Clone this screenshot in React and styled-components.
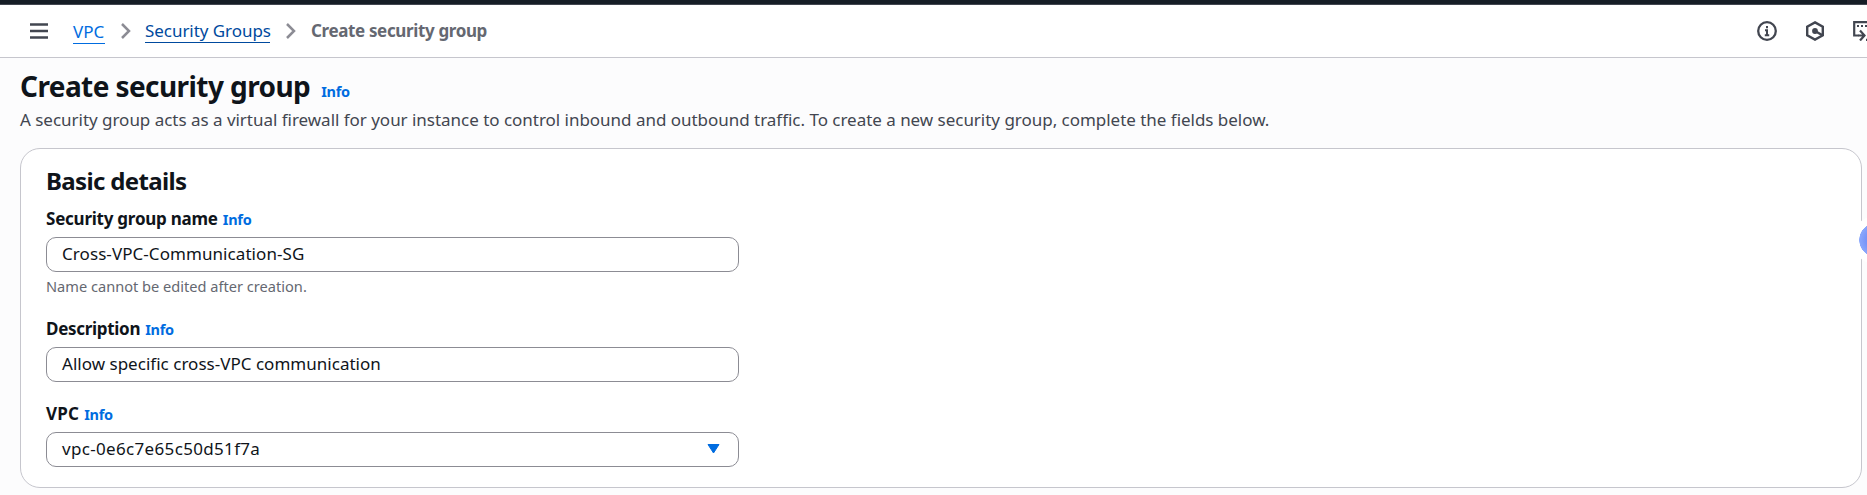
import React from 'react';
import styled, { createGlobalStyle } from 'styled-components';

const GlobalStyle = createGlobalStyle`
  * { box-sizing: border-box; }
  html, body { margin: 0; padding: 0; }
  body {
    height: 495px;
    overflow: hidden;
    background: #fcfcfd;
    color: #0f141a;
    font-family: "Noto Sans", "Open Sans", sans-serif;
    font-size: 17px;
    line-height: 25px;
  }
`;

const Page = styled.div`
  height: 495px;
  overflow: hidden;
  position: relative;
`;

const TopStrip = styled.div`
  height: 5px;
  background: #161d26;
  border-bottom: 1px solid #424650;
`;

const Toolbar = styled.header`
  height: 53px;
  background: #fff;
  border-bottom: 1px solid #c6c6cd;
  display: flex;
  align-items: center;
  justify-content: space-between;
  padding-left: 30px;
  overflow: hidden;
`;

const Crumbs = styled.nav`
  display: flex;
  align-items: center;
  white-space: nowrap;
`;

const MenuIcon = styled.svg`
  display: block;
  margin-right: 25px;
`;

const Chevron = styled.svg`
  display: block;
  margin: 0 14px 0 16px;
`;

const CrumbLink = styled.a`
  display: block;
  line-height: 22px;
  height: 23px;
  width: ${p => p.$width}px;
  margin-top: ${p => p.$drop || 0}px;
  color: ${p => (p.$active ? '#004a9e' : '#006ce0')};
  border-bottom: 1px solid currentColor;
  letter-spacing: ${p => p.$track || 0}px;
`;

const CurrentCrumb = styled.span`
  color: #656871;
  font-weight: 700;
  letter-spacing: -0.36px;
  margin: -2px 0 0 1px;
`;

const Tools = styled.div`
  display: flex;
  flex: none;
  gap: 28px;
  width: 110px;
  svg { display: block; flex: none; }
`;

const Main = styled.main`
  padding: 11px 5px 0 20px;
`;

const TitleRow = styled.div`
  display: flex;
  align-items: baseline;
  height: 34px;
  gap: 11px;
`;

const Title = styled.h1`
  margin: 0;
  font-size: 28px;
  line-height: 34px;
  font-weight: 700;
  letter-spacing: -0.58px;
`;

const Info = styled.a`
  color: #006ce0;
  font-size: 14.5px;
  line-height: 20px;
  font-weight: 700;
  letter-spacing: -0.25px;
`;

const Intro = styled.p`
  margin: 4px 0 15px;
  color: #424650;
  line-height: 26px;
  white-space: nowrap;
  letter-spacing: -0.025px;
`;

const Card = styled.section`
  height: 340px;
  background: #fff;
  border: 1px solid #c6c6cd;
  border-radius: 20px;
  padding: 17px 25px 0;
`;

const CardTitle = styled.h2`
  margin: 0 0 10px;
  font-size: 24px;
  line-height: 30px;
  font-weight: 700;
  letter-spacing: -0.65px;
`;

const Field = styled.div`
  width: 693px;
  margin-bottom: ${p => p.$gap || 0}px;
`;

const LabelRow = styled.div`
  display: flex;
  align-items: baseline;
  height: 25px;
  margin-bottom: 6px;
  gap: 5px;
`;

const Label = styled.label`
  font-weight: 700;
  letter-spacing: ${p => p.$track}px;
`;

const Control = styled.div`
  height: 35px;
  border: 1px solid #8c8c94;
  border-radius: 10px;
  padding: 0 18px 0 15px;
  display: flex;
  align-items: center;
  justify-content: space-between;
  background: #fff;
  svg { display: block; margin-top: -1px; }
`;

const Value = styled.span`
  line-height: 25px;
  margin-top: -3px;
  letter-spacing: ${p => p.$track}px;
`;

const Hint = styled.div`
  margin-top: 4px;
  font-size: 14.6px;
  line-height: 20px;
  color: #656871;
`;

const FloatingHandle = styled.div`
  position: absolute;
  left: 1852px;
  top: 216px;
  width: 48px;
  height: 48px;
  border-radius: 50%;
  background: radial-gradient(circle, #7895f8 0 10px, #8ba8fc 16.5px, #fff 17px);
`;

const Separator = () => (
  <Chevron width="10" height="16" viewBox="0 0 10 16" fill="none" stroke="#8c8c94" strokeWidth="2.5">
    <path d="M1 1l7 7-7 7" />
  </Chevron>
);

const FormField = ({ label, track, hint, gap, value, valueTrack, children }) => (
  <Field $gap={gap}>
    <LabelRow>
      <Label $track={track}>{label}</Label>
      <Info>Info</Info>
    </LabelRow>
    <Control>
      <Value $track={valueTrack}>{value}</Value>
      {children}
    </Control>
    {hint && <Hint>{hint}</Hint>}
  </Field>
);

export default function App() {
  return (
    <Page>
      <GlobalStyle />
      <TopStrip />
      <Toolbar>
        <Crumbs>
          <MenuIcon width="18" height="16" viewBox="0 0 18 16" fill="none" stroke="#424650" strokeWidth="2.3">
            <path d="M0 1.5h18M0 8h18M0 14.5h18" />
          </MenuIcon>
          <CrumbLink $width={32} $drop={2}>VPC</CrumbLink>
          <Separator />
          <CrumbLink $active $width={125} $track={-0.05}>Security Groups</CrumbLink>
          <Separator />
          <CurrentCrumb>Create security group</CurrentCrumb>
        </Crumbs>
        <Tools>
          <svg width="20" height="20" viewBox="0 0 20 20" fill="none" stroke="#424650" strokeWidth="2.3">
            <circle cx="10" cy="10" r="8.8" />
            <path d="M10 5v2.2M8 9.2h2v5M7.8 14.2h4.4" strokeWidth="2" />
          </svg>
          <svg width="20" height="20" viewBox="0 0 20 20" fill="none" stroke="#424650" strokeWidth="2.4">
            <path d="M10 1.4l7.8 4.2v8.8L10 18.6l-7.8-4.2V5.6z" />
            <path d="M10 10l7 4" />
            <circle cx="10" cy="10" r="2.9" fill="#424650" stroke="none" />
          </svg>
          <svg width="22" height="20" viewBox="0 0 22 20" fill="none" stroke="#424650" strokeWidth="2.2">
            <path d="M5.5 14.5H1.2V1.2H20V12M13 18.9h8" />
            <path d="M4 5h14" strokeDasharray="2 2" />
            <path d="M5 14.5h7M7 9.5l4.5 5-4.5 5" />
          </svg>
        </Tools>
      </Toolbar>
      <Main>
        <TitleRow>
          <Title>Create security group</Title>
          <Info>Info</Info>
        </TitleRow>
        <Intro>
          A security group acts as a virtual firewall for your instance to control inbound and outbound traffic. To create a new security group, complete the fields below.
        </Intro>
        <Card>
          <CardTitle>Basic details</CardTitle>
          <FormField label="Security group name" track={-0.24} value="Cross-VPC-Communication-SG" valueTrack={0.07} hint="Name cannot be edited after creation." gap={20} />
          <FormField label="Description" track={-0.3} value="Allow specific cross-VPC communication" valueTrack={0.02} gap={19} />
          <FormField label="VPC" track={0.2} value="vpc-0e6c7e65c50d51f7a" valueTrack={0.33}>
            <svg width="13" height="10" viewBox="0 0 13 10">
              <path d="M1 .5h11L6.5 9z" fill="#006ce0" stroke="#006ce0" strokeLinejoin="round" />
            </svg>
          </FormField>
        </Card>
      </Main>
      <FloatingHandle />
    </Page>
  );
}
